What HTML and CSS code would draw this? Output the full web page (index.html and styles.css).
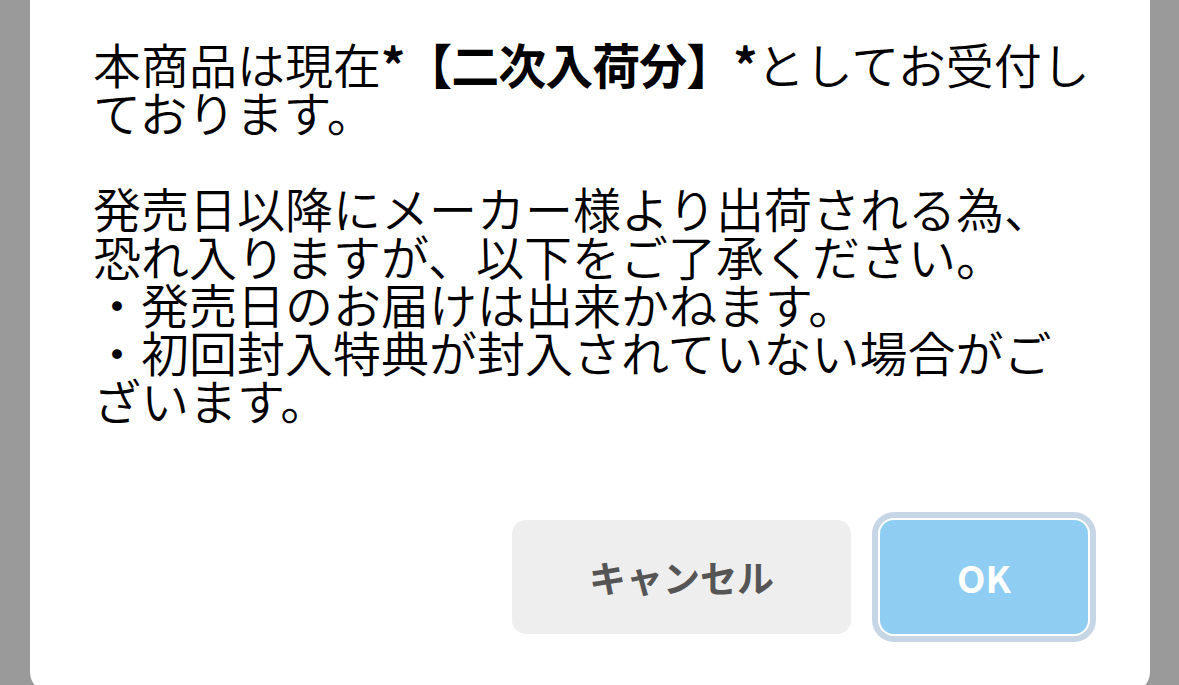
FILE: index.html
```html
<!DOCTYPE html>
<html lang="ja">
<head>
  <meta charset="UTF-8">
  <meta name="viewport" content="width=device-width, initial-scale=1.0">
  <title>確認</title>
  <link rel="stylesheet" href="styles.css">
</head>
<body>
  <div class="overlay">
    <div class="dialog" role="dialog">
      <p class="dialog-message">本商品は現在<strong>*【二次入荷分】*</strong>としてお受付し<br>ております。<br><br>発売日以降にメーカー様より出荷される為、<br>恐れ入りますが、以下をご了承ください。<br>・発売日のお届けは出来かねます。<br>・初回封入特典が封入されていない場合がご<br>ざいます。</p>
      <div class="dialog-actions">
        <button class="btn btn-cancel">キャンセル</button>
        <button class="btn btn-ok">OK</button>
      </div>
    </div>
  </div>
</body>
</html>
```

FILE: styles.css
```css
/* Page + overlay */
body {
  margin: 0;
  padding: 0;
  background: #9a9a9a;
  font-family: "Noto Sans CJK JP", "Noto Sans", sans-serif;
  height: 100vh;
  overflow: hidden;
}

.overlay {
  padding: 0 29px 0 30px;
}

/* Dialog box */
.dialog {
  margin-top: -20px;
  background: #ffffff;
  border-radius: 20px;
  padding: 59px 62px 58px 63px;
}

.dialog-message {
  margin: 0;
  font-size: 48px;
  font-weight: 350;
  line-height: 48px;
  color: #000;
  white-space: nowrap;
}

.dialog-message strong {
  font-weight: 700;
  letter-spacing: -1px;
}

/* Buttons */
.dialog-actions {
  display: flex;
  justify-content: flex-end;
  gap: 29px;
  margin-top: 97px;
}

.btn {
  height: 114px;
  border: none;
  border-radius: 14px;
  font-family: "Noto Sans CJK JP", "Noto Sans", sans-serif;
  font-size: 37px;
  font-weight: 700;
  cursor: pointer;
}

.btn-cancel {
  width: 339px;
  background-color: #eeeeee;
  color: #555555;
}

.btn-ok {
  width: 208px;
  background-color: #8fcdf2;
  color: #ffffff;
  box-shadow: 0 0 0 2px #ffffff, 0 0 0 8px #c6d6e5;
}
```
